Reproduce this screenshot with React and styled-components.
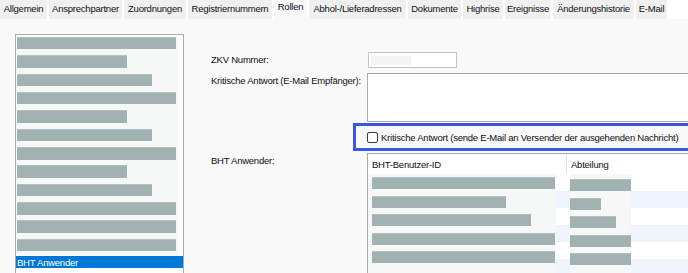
import React from "react";
import styled, { createGlobalStyle } from "styled-components";

const Global = createGlobalStyle`
  html, body { margin: 0; padding: 0; background: #ffffff; }
  body { font-family: "Liberation Sans", Arial, sans-serif; }
`;

const Page = styled.div`
  width: 688px;
  height: 273px;
  overflow: hidden;
  display: flex;
  flex-direction: column;
  font-family: "Liberation Sans", Arial, sans-serif;
  font-size: 9.5px;
  letter-spacing: -0.23px;
  color: #0f0f0f;
  background: #ffffff;
`;

const TabBar = styled.div`
  display: flex;
  gap: 2px;
  height: 19px;
  flex: none;
  background: #ffffff;
`;

const Tab = styled.div`
  width: ${(p) => p.$w}px;
  height: 19px;
  flex: none;
  background: ${(p) => (p.$active ? "#f9f9f9" : "#f0f0f0")};
  text-align: center;
  white-space: nowrap;
  overflow: hidden;
  line-height: ${(p) => (p.$active ? "14px" : "18px")};
`;

const Content = styled.div`
  flex: 1;
  display: flex;
  background: #f9f9f9;
  padding: 15px 0 0 15px;
  min-height: 0;
`;

const ListBox = styled.div`
  width: 167px;
  flex: none;
  border: 1px solid #ababab;
  border-bottom: none;
  background: #ffffff;
  padding-top: 1px;
  display: flex;
  flex-direction: column;
`;

const ListRedact = styled.div`
  width: 161px;
  background: #f6f8f8;
  display: flex;
  flex-direction: column;
  gap: 5.9px;
  padding: 1px 0 4px 1px;
`;

const Bar = styled.div`
  width: ${(p) => p.$w}px;
  height: ${(p) => p.$h || 12}px;
  background: #a2b1b1;
  box-shadow: inset 0 1px 0 #b3c0c0;
`;

const SelectedItem = styled.div`
  height: 12.6px;
  margin-top: 0.5px;
  background: #0078d7;
  color: #ffffff;
  line-height: 13px;
  padding-left: 1px;
  white-space: nowrap;
`;

const RightPane = styled.div`
  flex: 1;
  margin-left: 27px;
  padding-top: 18px;
  display: grid;
  grid-template-columns: 156px 1fr;
  grid-auto-rows: min-content;
  align-content: start;
  min-width: 0;
`;

const Label = styled.div`
  white-space: nowrap;
  line-height: 12px;
  padding-top: ${(p) => p.$top || 0}px;
  align-self: ${(p) => (p.$center ? "center" : "start")};
`;

const TextField = styled.div`
  width: 83px;
  height: 10px;
  border: 1px solid #c3c3c3;
  background: #ffffff;
  margin-left: 1px;
  padding: 2px;
  box-sizing: content-box;
  display: flex;
  align-items: center;
`;

const Blur = styled.div`
  width: 40px;
  height: 9px;
  background: #f3f3f3;
`;

const TextArea = styled.div`
  margin-top: 5px;
  height: 47px;
  border: 1px solid #adadad;
  border-top-color: #a4a4a4;
  background: #ffffff;
  margin-right: -20px;
`;

const HighlightRow = styled.div`
  grid-column: 2;
  margin-left: -14px;
  margin-top: 1px;
  width: 328px;
  height: 22px;
  border: 3px solid #3b55e4;
  display: flex;
  align-items: center;
  gap: 3px;
  padding-left: 11px;
  white-space: nowrap;
`;

const CheckBox = styled.span`
  width: 9px;
  height: 9px;
  border: 1px solid #3a3a3a;
  border-radius: 2px;
  background: #ffffff;
  flex: none;
`;

const GridLabel = styled(Label)`
  margin-top: 2px;
  padding-top: 2px;
`;

const DataGrid = styled.div`
  margin-top: 2px;
  margin-right: -20px;
  height: 200px;
  border: 1px solid #ababab;
  background: #ffffff;
  display: flex;
  flex-direction: column;
`;

const GridHeader = styled.div`
  display: flex;
  height: 20px;
  flex: none;
`;

const HeaderCell = styled.div`
  width: ${(p) => p.$w}px;
  flex: none;
  padding: 3px 0 0 4px;
  line-height: 16px;
  box-sizing: border-box;
  border-right: 1px solid ${(p) => (p.$divider ? "#e3e3e3" : "transparent")};
  white-space: nowrap;
`;

const GridBody = styled.div`
  flex: 1;
  display: flex;
  align-items: flex-start;
  background: repeating-linear-gradient(
    to bottom,
    #ffffff 0px,
    #ffffff 17px,
    #eef3fc 17px,
    #eef3fc 34px
  );
`;

const RedactColumn = styled.div`
  box-sizing: border-box;
  width: ${(p) => p.$w}px;
  margin-left: ${(p) => p.$ml}px;
  height: 110px;
  flex: none;
  background: #f6f8f8;
  display: flex;
  flex-direction: column;
  gap: 6.5px;
  padding-top: ${(p) => p.$pt}px;
  padding-left: ${(p) => p.$pl}px;
`;

const tabs = [
  { label: "Allgemein", w: 47 },
  { label: "Ansprechpartner", w: 73 },
  { label: "Zuordnungen", w: 62 },
  { label: "Registriernummern", w: 84 },
  { label: "Rollen", w: 33, active: true },
  { label: "Abhol-/Lieferadressen", w: 97 },
  { label: "Dokumente", w: 53 },
  { label: "Highrise", w: 40 },
  { label: "Ereignisse", w: 46 },
  { label: "Änderungshistorie", w: 81 },
  { label: "E-Mail", w: 31 },
];

const listBars = [159, 110, 135, 159, 110, 135, 159, 110, 135, 159, 159, 159];
const idBars = [183, 134, 159, 183, 183];
const deptBars = [61, 31, 46, 61, 61];

export default function App() {
  return (
    <>
      <Global />
      <Page>
        <TabBar>
          {tabs.map((t) => (
            <Tab key={t.label} $w={t.w} $active={t.active}>
              {t.label}
            </Tab>
          ))}
        </TabBar>
        <Content>
          <ListBox>
            <ListRedact>
              {listBars.map((w, i) => (
                <Bar key={i} $w={w} $h={12.46} />
              ))}
            </ListRedact>
            <SelectedItem>BHT Anwender</SelectedItem>
          </ListBox>
          <RightPane>
            <Label $center>ZKV Nummer:</Label>
            <TextField>
              <Blur />
            </TextField>
            <Label $top={7}>Kritische Antwort (E-Mail Empfänger):</Label>
            <TextArea />
            <HighlightRow>
              <CheckBox />
              <span>Kritische Antwort (sende E-Mail an Versender der ausgehenden Nachricht)</span>
            </HighlightRow>
            <GridLabel>BHT Anwender:</GridLabel>
            <DataGrid>
              <GridHeader>
                <HeaderCell $w={199} $divider>BHT-Benutzer-ID</HeaderCell>
                <HeaderCell $w={120}>Abteilung</HeaderCell>
              </GridHeader>
              <GridBody>
                <RedactColumn $w={188} $ml={0} $pt={3} $pl={4}>
                  {idBars.map((w, i) => (
                    <Bar key={i} $w={w} />
                  ))}
                </RedactColumn>
                <RedactColumn $w={61} $ml={14} $pt={5} $pl={0}>
                  {deptBars.map((w, i) => (
                    <Bar key={i} $w={w} />
                  ))}
                </RedactColumn>
              </GridBody>
            </DataGrid>
          </RightPane>
        </Content>
      </Page>
    </>
  );
}
